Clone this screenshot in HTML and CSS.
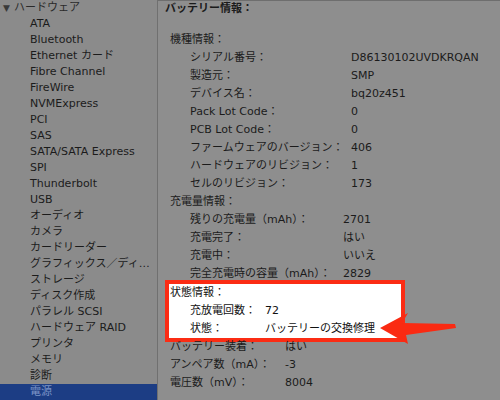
FILE: index.html
```html
<!DOCTYPE html>
<html lang="ja">
<head>
<meta charset="utf-8">
<link rel="stylesheet" href="styles.css">
</head>
<body>
<div class="window">
  <aside class="sidebar">
    <div class="group-head"><span class="tri">▼</span>ハードウェア</div>
    <div class="item">ATA</div>
    <div class="item">Bluetooth</div>
    <div class="item">Ethernet カード</div>
    <div class="item">Fibre Channel</div>
    <div class="item">FireWire</div>
    <div class="item">NVMExpress</div>
    <div class="item">PCI</div>
    <div class="item">SAS</div>
    <div class="item">SATA/SATA Express</div>
    <div class="item">SPI</div>
    <div class="item">Thunderbolt</div>
    <div class="item">USB</div>
    <div class="item">オーディオ</div>
    <div class="item">カメラ</div>
    <div class="item">カードリーダー</div>
    <div class="item">グラフィックス／ディ…</div>
    <div class="item">ストレージ</div>
    <div class="item">ディスク作成</div>
    <div class="item">パラレル SCSI</div>
    <div class="item">ハードウェア RAID</div>
    <div class="item">プリンタ</div>
    <div class="item">メモリ</div>
    <div class="item">診断</div>
    <div class="item selected">電源</div>
  </aside>
  <main class="content">
    <h1 class="title">バッテリー情報：</h1>

    <div class="section">
      <div class="sec-title">機種情報：</div>
      <div class="kv kv-model">
        <span>シリアル番号：</span><span>D86130102UVDKRQAN</span>
        <span>製造元：</span><span>SMP</span>
        <span>デバイス名：</span><span>bq20z451</span>
        <span>Pack Lot Code：</span><span>0</span>
        <span>PCB Lot Code：</span><span>0</span>
        <span>ファームウェアのバージョン：</span><span>406</span>
        <span>ハードウェアのリビジョン：</span><span>1</span>
        <span>セルのリビジョン：</span><span>173</span>
      </div>
    </div>

    <div class="section">
      <div class="sec-title">充電量情報：</div>
      <div class="kv kv-charge">
        <span>残りの充電量（mAh）：</span><span>2701</span>
        <span>充電完了：</span><span>はい</span>
        <span>充電中：</span><span>いいえ</span>
        <span>完全充電時の容量（mAh）：</span><span>2829</span>
      </div>
    </div>

    <div class="section highlight">
      <div class="sec-title">状態情報：</div>
      <div class="kv kv-status">
        <span>充放電回数：</span><span>72</span>
        <span>状態：</span><span>バッテリーの交換修理</span>
      </div>
    </div>

    <div class="kv kv-top">
      <span>バッテリー装着：</span><span>はい</span>
      <span>アンペア数（mA）：</span><span>-3</span>
      <span>電圧数（mV）：</span><span>8004</span>
    </div>
  </main>

  <svg class="arrow" width="90" height="40" viewBox="0 0 90 40" aria-hidden="true">
    <path d="M0 15 L28 0 L22 10 L75 11 L76 15 L26 22 L28 31 Z" fill="#fa2a12"/>
  </svg>
</div>
</body>
</html>
```

FILE: styles.css
```css
* { box-sizing: border-box; }

html, body {
  margin: 0;
  padding: 0;
}

body {
  width: 500px;
  height: 400px;
  overflow: hidden;
  font-family: "DejaVu Sans", "Noto Sans CJK JP", sans-serif;
  font-size: 11px;
  color: #1b1b1b;
  background: #8e8e8e;
}

.window {
  position: relative;
  display: flex;
  width: 500px;
  height: 400px;
  border-top: 1px solid #6e6e6e;
}

.sidebar {
  width: 158px;
  flex: none;
  background: #8b8b8b;
  border-right: 1px solid #707070;
  margin-top: -1px;
}

.group-head,
.item {
  height: 16px;
  line-height: 16px;
  white-space: nowrap;
  overflow: hidden;
}

.group-head {
  padding-left: 3px;
  color: #2a2a2a;
}

.tri {
  display: inline-block;
  font-size: 9px;
  color: #3a3a3a;
  width: 11px;
}

.item {
  padding-left: 30px;
}

.item.selected {
  background: #1c3d84;
  color: #7b93c6;
}

.content {
  flex: 1;
  padding-left: 7px;
  margin-top: -1px;
}

.title {
  margin: 0;
  height: 17px;
  line-height: 17px;
  font-size: 11px;
  font-weight: bold;
  margin-bottom: 14px;
}

.section {
  padding-left: 5px;
}

.sec-title {
  height: 18px;
  line-height: 18px;
}

.kv {
  display: grid;
  grid-auto-rows: 18px;
  line-height: 18px;
  padding-left: 20px;
  white-space: nowrap;
}

.kv-model { grid-template-columns: 161px auto; }
.kv-charge { grid-template-columns: 153px auto; }
.kv-status { grid-template-columns: 75px auto; }
.kv-top {
  grid-template-columns: 115px auto;
  padding-left: 5px;
}

.highlight {
  width: 240px;
  margin-top: -3px;
  margin-bottom: -4px;
  border: 4px solid #fb2c14;
  background: #ffffff;
  padding-left: 1px;
  color: #111;
}

.arrow {
  position: absolute;
  left: 380px;
  top: 312px;
}
```
